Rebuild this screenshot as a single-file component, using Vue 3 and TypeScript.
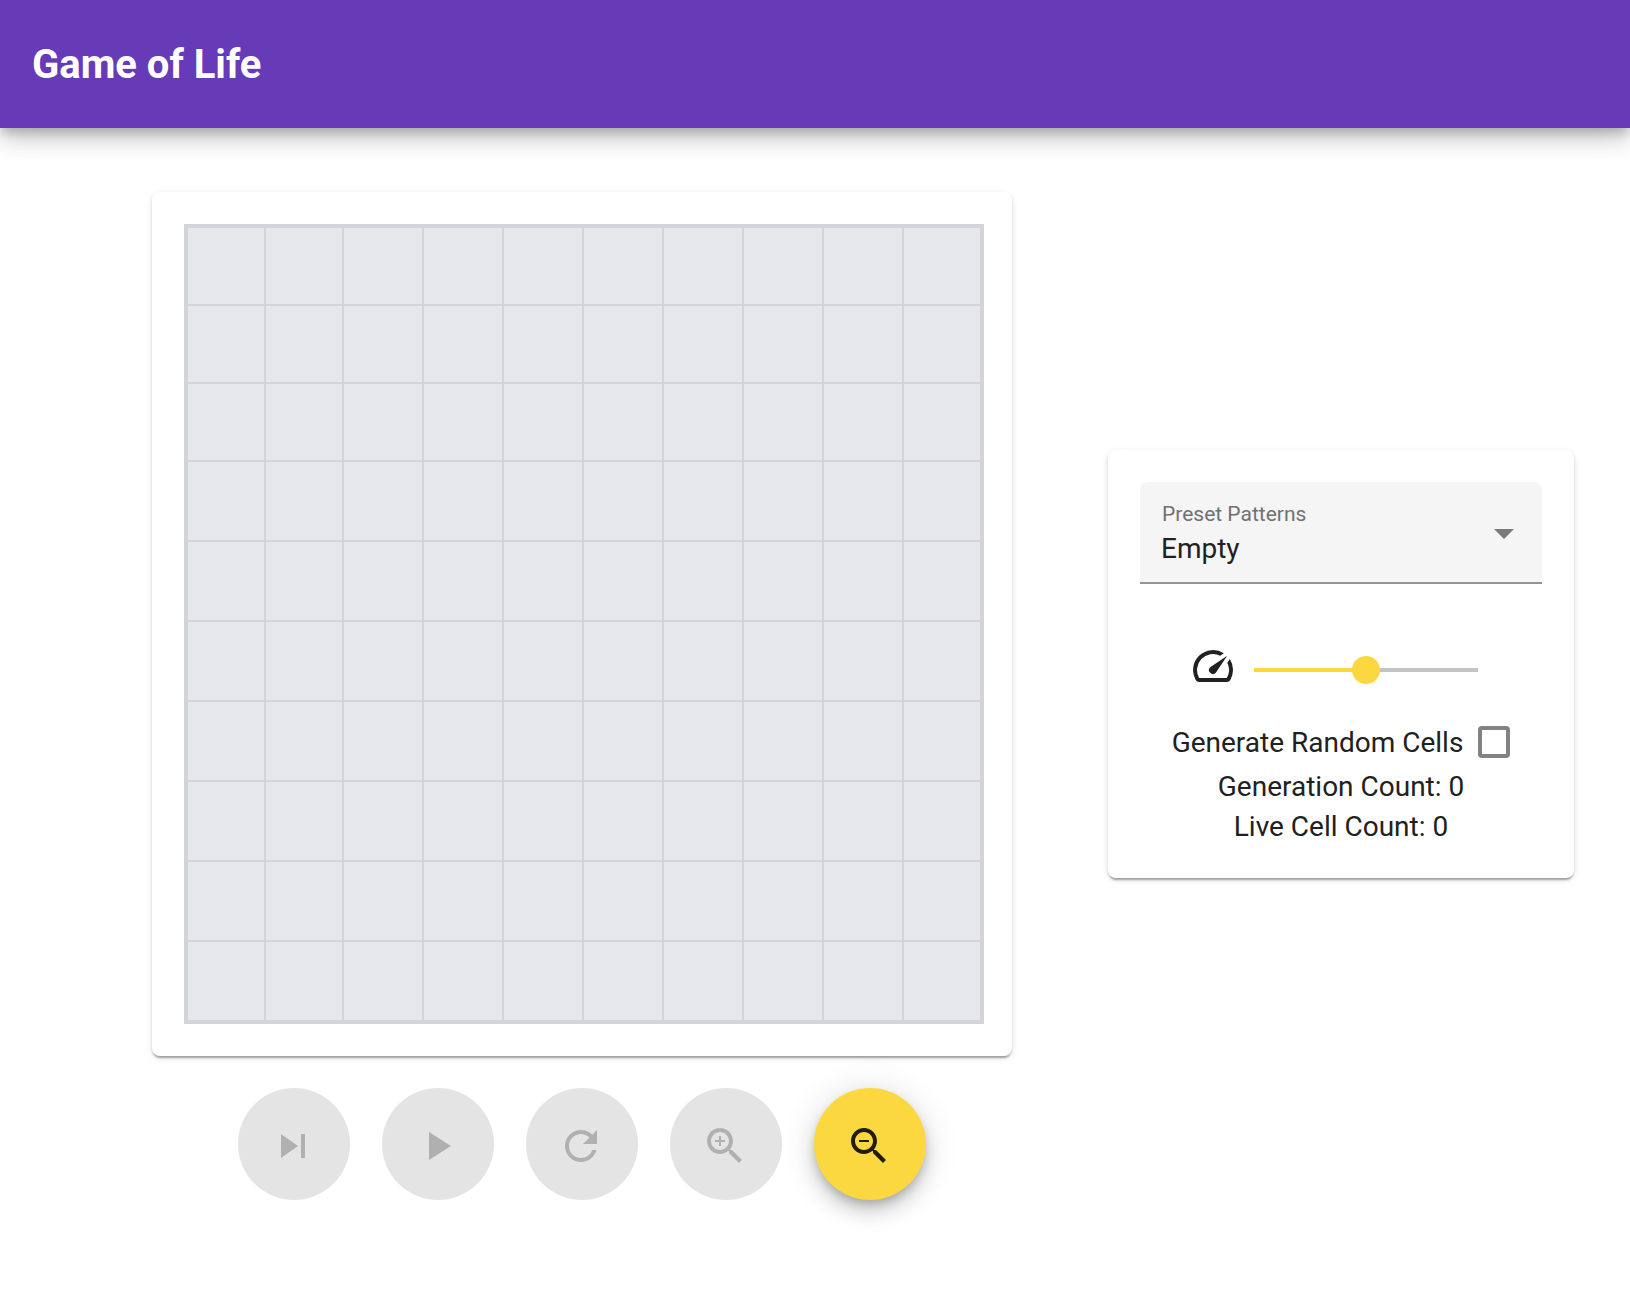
<script setup lang="ts">
import { computed, ref } from 'vue'

const SIZE = 10

const cells = ref<boolean[]>(Array.from({ length: SIZE * SIZE }, () => false))
const pattern = ref('Empty')
const speed = ref(50)
const random = ref(false)
const generation = ref(0)
const liveCount = computed(() => cells.value.filter(Boolean).length)

const lens =
  'M15.5 14h-.79l-.28-.27C15.41 12.59 16 11.11 16 9.5 16 5.91 13.09 3 9.5 3S3 5.91 3 9.5 5.91 16 9.5 16c1.61 0 3.09-.59 4.23-1.57l.27.28v.79l5 4.99L20.49 19l-4.99-5zm-6 0C7.01 14 5 11.99 5 9.5S7.01 5 9.5 5 14 7.01 14 9.5 11.99 14 9.5 14z'

interface Action {
  label: string
  icon: string
  disabled: boolean
}

const actions: Action[] = [
  { label: 'Next generation', icon: 'M6 18l8.5-6L6 6v12zM16 6v12h2V6h-2z', disabled: true },
  { label: 'Play', icon: 'M8 5v14l11-7z', disabled: true },
  {
    label: 'Reset',
    icon: 'M17.65 6.35C16.2 4.9 14.21 4 12 4c-4.42 0-7.99 3.58-7.99 8s3.57 8 7.99 8c3.73 0 6.84-2.55 7.73-6h-2.08c-.82 2.33-3.04 4-5.65 4-3.31 0-6-2.69-6-6s2.69-6 6-6c1.66 0 3.14.69 4.22 1.78L13 11h7V4l-2.35 2.35z',
    disabled: true,
  },
  { label: 'Zoom in', icon: lens + 'M12 10h-2v2H9v-2H7V9h2V7h1v2h2v1z', disabled: true },
  { label: 'Zoom out', icon: lens + 'M7 9h5v1H7z', disabled: false },
]

function toggle(index: number) {
  cells.value[index] = !cells.value[index]
}
</script>

<template>
  <div class="app">
    <header class="toolbar">
      <h1>Game of Life</h1>
    </header>

    <main class="content">
      <section class="game">
        <div class="card board-card">
          <div class="board">
            <div
              v-for="(alive, i) in cells"
              :key="i"
              class="cell"
              :class="{ alive }"
              @click="toggle(i)"
            ></div>
          </div>
        </div>
        <div class="actions">
          <button
            v-for="action in actions"
            :key="action.label"
            class="fab"
            type="button"
            :aria-label="action.label"
            :disabled="action.disabled"
          >
            <svg class="icon" viewBox="0 0 24 24" aria-hidden="true"><path :d="action.icon" /></svg>
          </button>
        </div>
      </section>

      <aside class="card settings">
        <div class="field">
          <label for="pattern">Preset Patterns</label>
          <select id="pattern" v-model="pattern">
            <option>Empty</option>
          </select>
          <svg class="arrow" viewBox="0 0 20 10" aria-hidden="true"><path d="M0 0h20L10 10z" /></svg>
        </div>

        <div class="speed">
          <svg class="icon speed-icon" viewBox="0 0 24 24" aria-hidden="true">
            <path d="M20.38 8.57l-1.23 1.85a8 8 0 0 1-.22 7.58H5.07A8 8 0 0 1 15.58 6.85l1.85-1.23A10 10 0 0 0 3.35 19a2 2 0 0 0 1.72 1h13.85a2 2 0 0 0 1.74-1 10 10 0 0 0-.27-10.44zm-9.79 6.84a2 2 0 0 0 2.83 0l5.66-8.49-8.49 5.66a2 2 0 0 0 0 2.83z" />
          </svg>
          <input
            v-model.number="speed"
            type="range"
            min="0"
            max="100"
            aria-label="Speed"
            :style="{ '--fill': speed + '%' }"
          />
        </div>

        <label class="random">
          <span>Generate Random Cells</span>
          <input v-model="random" type="checkbox" />
        </label>
        <p>Generation Count: {{ generation }}</p>
        <p>Live Cell Count: {{ liveCount }}</p>
      </aside>
    </main>
  </div>
</template>

<style>
body {
  margin: 0;
  background: #fff;
}
</style>

<style scoped>
.app {
  min-height: 100vh;
  font-family: Roboto, 'Liberation Sans', sans-serif;
  font-size: 28px;
  line-height: 40px;
  color: #212121;
}

.app *,
.app {
  box-sizing: border-box;
}

.toolbar {
  display: flex;
  align-items: center;
  height: 128px;
  padding: 2px 32px 0;
  background: #673ab7;
  color: #fff;
  box-shadow:
    0 6px 10px -2px rgba(0, 0, 0, 0.2),
    0 12px 20px 0 rgba(0, 0, 0, 0.14),
    0 2px 36px 0 rgba(0, 0, 0, 0.12);
}

h1 {
  margin: 0;
  font-size: 40px;
  font-weight: 700;
}

.content {
  display: grid;
  grid-template-columns: minmax(0, 860fr) minmax(0, 466fr);
  align-items: center;
  gap: 96px;
  padding: 0 56px 64px 152px;
}

.game {
  padding-top: 64px;
}

.card {
  border-radius: 8px;
  background: #fff;
  box-shadow:
    0 4px 2px -2px rgba(0, 0, 0, 0.2),
    0 2px 2px 0 rgba(0, 0, 0, 0.14),
    0 2px 6px 0 rgba(0, 0, 0, 0.12);
}

.board-card {
  padding: 32px 28px 32px 32px;
}

.board {
  display: grid;
  grid-template-columns: 76fr 76fr repeat(7, 78fr) 76fr;
  grid-template-rows: repeat(3, 76fr) repeat(7, 78fr);
  gap: 2px;
  aspect-ratio: 1;
  border: 4px solid #d1d5db;
  background: #d1d5db;
}

.cell {
  background: #e5e7eb;
}

.cell.alive {
  background: #673ab7;
}

.actions {
  display: flex;
  justify-content: center;
  gap: 32px;
  margin-top: 32px;
}

.icon {
  display: block;
  width: 48px;
  height: 48px;
  fill: currentColor;
}

.fab {
  display: flex;
  align-items: center;
  justify-content: center;
  width: 112px;
  height: 112px;
  padding: 4px 2px 0 0;
  border: 0;
  border-radius: 50%;
  background: #fcd840;
  color: rgba(0, 0, 0, 0.87);
  box-shadow:
    0 6px 10px -2px rgba(0, 0, 0, 0.2),
    0 12px 20px 0 rgba(0, 0, 0, 0.14),
    0 2px 36px 0 rgba(0, 0, 0, 0.12);
}

.fab:disabled {
  background: #e4e4e4;
  color: #b0b0b0;
  box-shadow: none;
}

.settings {
  padding: 32px 32px 31px;
}

.field {
  position: relative;
}

.field label {
  position: absolute;
  top: 20px;
  left: 22px;
  font-size: 21px;
  line-height: 24px;
  color: #717171;
  pointer-events: none;
}

.field select {
  display: block;
  width: 100%;
  height: 102px;
  padding: 47px 56px 13px 21px;
  appearance: none;
  border: 0;
  border-bottom: 2px solid #949494;
  border-radius: 8px 8px 0 0;
  outline: 0;
  background: #f5f5f5;
  color: inherit;
  font: inherit;
}

.arrow {
  position: absolute;
  top: 47px;
  right: 28px;
  width: 20px;
  height: 10px;
  fill: #7b7b7b;
  pointer-events: none;
}

.speed {
  display: flex;
  align-items: center;
  justify-content: center;
  gap: 17px;
  height: 96px;
  margin-top: 38px;
  padding-right: 15px;
}

.speed-icon {
  margin-bottom: 8px;
}

input {
  margin: 0;
  appearance: none;
}

input[type='range'] {
  width: 224px;
  height: 28px;
  background: linear-gradient(to right, #fcd840 var(--fill), #c4c4c4 var(--fill)) center / 100% 4px no-repeat;
}

input[type='range']::-webkit-slider-thumb {
  width: 28px;
  height: 28px;
  appearance: none;
  border-radius: 50%;
  background: #fcd840;
}

.random {
  display: flex;
  align-items: center;
  justify-content: center;
  gap: 15px;
  height: 48px;
  margin-bottom: 1px;
}

.random span {
  padding-top: 2px;
}

input[type='checkbox'] {
  width: 32px;
  height: 32px;
  border: 4px solid #828282;
  border-radius: 4px;
}

input[type='checkbox']:checked {
  border-color: #fcd840;
  background: #fcd840;
}

p {
  margin: 0;
  text-align: center;
}
</style>
